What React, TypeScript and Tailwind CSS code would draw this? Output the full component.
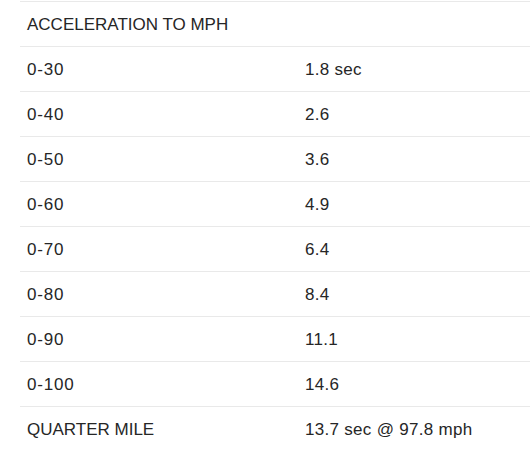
import React from "react";

const rows: [string, string][] = [
  ["ACCELERATION TO MPH", ""],
  ["0-30", "1.8 sec"],
  ["0-40", "2.6"],
  ["0-50", "3.6"],
  ["0-60", "4.9"],
  ["0-70", "6.4"],
  ["0-80", "8.4"],
  ["0-90", "11.1"],
  ["0-100", "14.6"],
  ["QUARTER MILE", "13.7 sec @ 97.8 mph"],
];

export default function App() {
  return (
    <div
      className="w-[530px] h-[462px] bg-white pl-[20px] pt-px text-[#262626] text-[17px]"
      style={{ fontFamily: '"Liberation Sans", Arial, sans-serif' }}
    >
      {rows.map(([a, b], i) => {
        const capsLabel = i === 0 || i === rows.length - 1;
        return (
          <div
            key={i}
            className="grid grid-cols-[278px_1fr] h-[45px] items-center border-t border-[#e9e9e9]"
          >
            <div className={`pl-[7px] leading-none ${capsLabel ? "" : "tracking-[0.8px]"}`}>{a}</div>
            <div className="pl-[7px] leading-none tracking-[0.3px]">{b}</div>
          </div>
        );
      })}
    </div>
  );
}
